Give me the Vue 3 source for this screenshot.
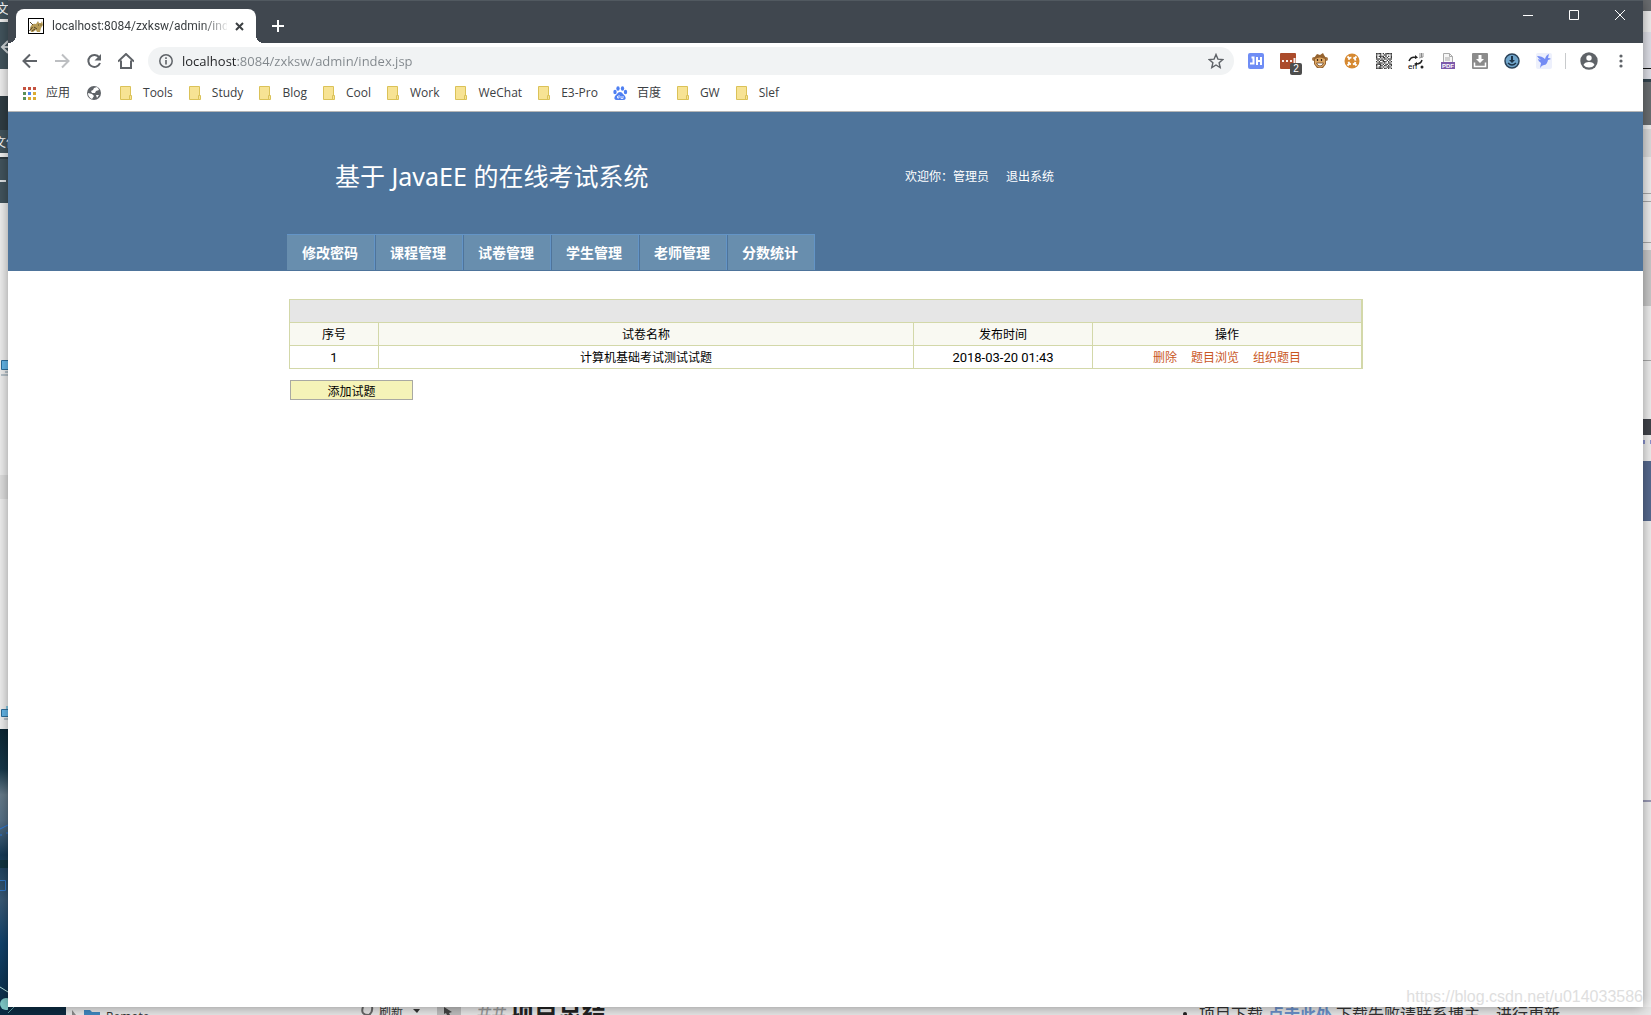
<script setup>
import { ref } from 'vue'

const address = ref('localhost:8084/zxksw/admin/index.jsp')

const bookmarks = [
  { name: 'Tools', icon: 'folder' },
  { name: 'Study', icon: 'folder' },
  { name: 'Blog', icon: 'folder' },
  { name: 'Cool', icon: 'folder' },
  { name: 'Work', icon: 'folder' },
  { name: 'WeChat', icon: 'folder' },
  { name: 'E3-Pro', icon: 'folder' },
  { name: '百度', icon: 'paw' },
  { name: 'GW', icon: 'folder' },
  { name: 'Slef', icon: 'folder' },
]

const menu = ['修改密码', '课程管理', '试卷管理', '学生管理', '老师管理', '分数统计']

const papers = [{ id: 1, name: '计算机基础考试测试试题', time: '2018-03-20 01:43' }]
const actions = ['删除', '题目浏览', '组织题目']

// Module pattern of the QR extension icon, one string per row.
const qr = [
  '111101011111', '100100110001', '101111010101', '100101101001', '111010110111', '010111001010',
  '101001110101', '011110100110', '111101011011', '100110110101', '101101001110', '111110110101',
]
const qrCells = qr.flatMap((row, y) => [...row].map((v, x) => ({ x, y, v })).filter((c) => c.v === '1'))
</script>

<template>
  <div class="desktop">
    <svg class="edge left" aria-hidden="true">
      <defs>
        <linearGradient id="wall" x1="0" y1="0" x2="0" y2="1">
          <stop offset="0" stop-color="#0b2633" />
          <stop offset=".14" stop-color="#17384a" />
          <stop offset=".23" stop-color="#667b8a" />
          <stop offset=".32" stop-color="#577187" />
          <stop offset=".44" stop-color="#173b57" />
          <stop offset=".6" stop-color="#3a5a76" />
          <stop offset=".75" stop-color="#12436c" />
          <stop offset="1" stop-color="#0b2b43" />
        </linearGradient>
      </defs>
      <rect width="8" height="203" fill="#42545d" />
      <text x="-4" y="13" font-size="13" fill="#fff">文</text>
      <rect y="19" width="8" height="3" fill="#f2f2f2" />
      <path d="M8 41L2 47l6 6M2 47h6" stroke="#cfd5d8" stroke-width="2" fill="none" />
      <rect y="69" width="8" height="27" fill="#f0f0f0" />
      <rect y="96" width="8" height="34" fill="#303d44" />
      <text x="-6" y="147" font-size="12" fill="#fff">文件</text>
      <rect y="153" width="8" height="4" fill="#f2f2f2" />
      <rect y="157" width="8" height="2" fill="#2e3b42" />
      <path d="M0 181h6" stroke="#dfe3e5" stroke-width="2" />
      <rect y="203" width="8" height="526" fill="#f0f0f0" />
      <rect y="475" width="8" height="24" fill="#e0e0e0" />
      <path d="M8 360.500H1.500v9H8" fill="#66b9ec" stroke="#2d6f9c" />
      <path d="M5 372h3M1 375h7" stroke="#8098a8" />
      <path d="M8 709.500H1.500v7H8" fill="#66b9ec" stroke="#2d6f9c" />
      <path d="M6 709v-3h2v3z" fill="#8bcde8" />
      <path d="M4 719h4" stroke="#8098a8" />
      <rect y="729" width="8" height="286" fill="url(#wall)" />
      <path d="M0 829l8-4M0 835h2M6 833h2" stroke="#2d7be0" />
      <rect y="860" width="8" height="8" fill="#123541" />
      <path d="M0 880.500h5.500v10H0" fill="none" stroke="#2f78c8" />
      <path d="M0 987l8 5" stroke="#b9e5e0" />
      <circle cx="6" cy="1004" r="6" fill="#7fc9c8" />
    </svg>

    <div class="browser">
      <div class="tabstrip">
        <div class="tab">
          <svg width="16" height="16" viewBox="0 0 16 16" aria-hidden="true">
            <rect x=".5" y=".5" width="15" height="15" fill="#fff" stroke="#000" />
            <path d="M2 10q2-5 6-4l2-3 1 2h2l1-2 1 4-2 3-1 4H9l-1-2-3 2H3z" fill="#b79b55" />
            <path d="M2 4l3 3M1.500 13l3-4M10 7h1M12.500 7h1M6 9l3 2M4 13l3-2" stroke="#514329" />
          </svg>
          <span class="tab-title">localhost:8084/zxksw/admin/index.jsp</span>
          <button class="plain" aria-label="Close tab">
            <svg width="9" height="9" viewBox="0 0 9 9"><path d="M1 1l7 7M8 1L1 8" stroke="#3c4043" stroke-width="2" /></svg>
          </button>
        </div>
        <button class="plain new-tab" aria-label="New tab">
          <svg width="12" height="12" viewBox="0 0 12 12"><path d="M6 0v12M0 6h12" stroke="#fff" stroke-width="2" /></svg>
        </button>
        <div class="window-controls">
          <button class="plain" aria-label="Minimize"><svg width="10" height="10"><path d="M0 5.500h10" stroke="#fff" /></svg></button>
          <button class="plain" aria-label="Maximize"><svg width="10" height="10"><path d="M.5.5h9v9h-9z" fill="none" stroke="#fff" /></svg></button>
          <button class="plain" aria-label="Close"><svg width="10" height="10"><path d="M0 0l10 10M10 0L0 10" stroke="#fff" /></svg></button>
        </div>
      </div>

      <div class="toolbar">
        <div class="nav-buttons">
          <button class="plain" aria-label="Back"><svg width="16" height="16" viewBox="0 0 16 16"><path d="M15 8H2M8 1.500L1.500 8 8 14.500" fill="none" stroke="#5f6368" stroke-width="2" /></svg></button>
          <button class="plain" aria-label="Forward"><svg width="16" height="16" viewBox="0 0 16 16"><path d="M1 8h13M8 1.500L14.500 8 8 14.500" fill="none" stroke="#bdbfc2" stroke-width="2" /></svg></button>
          <button class="plain" aria-label="Reload"><svg width="16" height="16" viewBox="0 0 16 16"><path d="M13.300 4.500A6 6 0 1 0 14 10" fill="none" stroke="#5f6368" stroke-width="2" /><path d="M15 1v6.500H8.500z" fill="#5f6368" /></svg></button>
          <button class="plain" aria-label="Home"><svg width="16" height="16" viewBox="0 0 16 16"><path d="M0 8.500L8 1l8 7.500M3 7.500V15h10V7.500" fill="none" stroke="#5f6368" stroke-width="2" /></svg></button>
        </div>
        <div class="omnibox">
          <svg width="14" height="14" viewBox="0 0 14 14" aria-hidden="true"><circle cx="7" cy="7" r="6.200" fill="none" stroke="#5f6368" stroke-width="1.500" /><path d="M7 6v4.500M7 3.300v1.700" stroke="#5f6368" stroke-width="1.600" /></svg>
          <input v-model="address" aria-label="Address" spellcheck="false" />
          <button class="plain" aria-label="Bookmark"><svg width="16" height="16" viewBox="0 0 16 16"><path d="M8 1.500l1.900 4.600 4.900.4-3.700 3.200 1.100 4.900L8 12l-4.200 2.600 1.100-4.900L1.200 6.500l4.900-.4z" fill="none" stroke="#5f6368" stroke-width="1.400" /></svg></button>
        </div>
        <div class="extensions">
          <button class="plain" aria-label="JH">
            <svg width="16" height="16"><rect width="16" height="16" rx="2" fill="#6f8df5" /><path d="M2 10.500h3.500V4.500H3.500M9 4v8M13 4v8M9 8h4" fill="none" stroke="#fff" stroke-width="2" /></svg>
          </button>
          <button class="plain badged" aria-label="Passwords">
            <svg width="16" height="16"><rect width="16" height="16" rx="1" fill="#ab4b2b" /><path d="M2 8h2M6 8h2M10 8h2M14.500 5v5" stroke="#fff" stroke-width="2" stroke-opacity=".9" /></svg>
            <span class="badge">2</span>
          </button>
          <button class="plain" aria-label="Tampermonkey">
            <svg width="16" height="16"><circle cx="2" cy="6" r="2" fill="#a47443" /><circle cx="14" cy="6" r="2" fill="#a47443" /><path d="M2 5l3-4 3 1 3-2 1 2 2 3v6l-3 4H5l-3-4z" fill="#95632f" /><path d="M3 6q5-3 10 0v5q-5 7-10 0z" fill="#dda764" /><path d="M4.500 10h7q-1 3-3.500 3t-3.500-3z" fill="#fff" stroke="#694322" stroke-width=".8" /><path d="M5.500 6v2M9.500 6v2" stroke="#37251a" stroke-width="1.200" /></svg>
          </button>
          <button class="plain" aria-label="Ring">
            <svg width="16" height="16"><circle cx="8" cy="8" r="7.500" fill="#d68931" /><circle cx="8" cy="8" r="3.600" fill="none" stroke="#fff" stroke-width="1.800" stroke-dasharray="3.600 2.050" stroke-dashoffset="-1" /><path d="M3.500 3.500l2 2M12.500 3.500l-2 2M3.500 12.500l2-2M12.500 12.500l-2-2" stroke="#fff" stroke-width="1.800" /></svg>
          </button>
          <button class="plain" aria-label="QR code">
            <svg width="16" height="16" viewBox="0 0 12 12"><rect v-for="c in qrCells" :key="c.x + '-' + c.y" :x="c.x" :y="c.y" width="1" height="1" fill="#3b3b3b" /></svg>
          </button>
          <button class="plain" aria-label="Translate">
            <svg class="glyphs" width="16" height="16"><path d="M1 8Q3 3 8 4.500M14 7q-1 4-6 4" fill="none" stroke="#222" stroke-width="1.500" /><path d="M7 2l3 2.500L7 6zM9 9l-3 2 3 2z" fill="#222" /><path d="M11 1h5M11 3h5M13.500 0v4M11 5l4-1" stroke="#777" stroke-width=".8" /><text x="0" y="16" font-size="8">en</text><circle cx="14" cy="14" r="1.500" fill="#222" /></svg>
          </button>
          <button class="plain" aria-label="PDF">
            <svg class="glyphs" width="16" height="16"><path d="M3.500 9V.5h6l3 3V9" fill="#f6f6f6" stroke="#aaa" /><path d="M9.500.5v3h3M5 5h5M5 7h5" stroke="#aaa" fill="none" /><rect x="1" y="9" width="14" height="7" fill="#7d59ab" /><text x="2" y="15" font-size="6" font-weight="700" fill="#fff">PDF</text></svg>
          </button>
          <button class="plain" aria-label="Downloads">
            <svg width="16" height="16"><rect width="16" height="16" rx="1" fill="#8b8b8b" /><path d="M6.500 2h3v4H12L8 10 4 6h2.500z" fill="#fff" /><path d="M2.500 9.500v4h11v-4" fill="none" stroke="#fff" stroke-width="1.500" /></svg>
          </button>
          <button class="plain" aria-label="Download manager">
            <svg width="16" height="16"><circle cx="8" cy="8" r="7" fill="#70a5cb" stroke="#294259" stroke-width="1.500" /><path d="M7 3h2v4h2L8 10 5 7h2z" fill="#1c3348" /><path d="M4 10q4 4 8 0" fill="none" stroke="#1c3348" stroke-width="1.300" /></svg>
          </button>
          <button class="plain" aria-label="Bird">
            <svg width="16" height="16"><rect width="16" height="16" rx="2" fill="#edf0fc" /><path d="M1 3q5 0 8 3 1-4 4-5l-1 4q2 0 3 1l-3 1q-1 5-4 5-2 0-4 3l1-5Q2 8 2 6l3 1Q2 5 1 3z" fill="#748cf4" /></svg>
          </button>
        </div>
        <span class="separator"></span>
        <button class="plain" aria-label="Profile"><svg width="18" height="18" viewBox="0 0 18 18"><circle cx="9" cy="9" r="8.700" fill="#5f6368" /><circle cx="9" cy="6" r="2.700" fill="#fff" /><path d="M3.500 13q1-3 5.500-3t5.500 3q-2 2.500-5.500 2.500T3.500 13z" fill="#fff" /></svg></button>
        <button class="plain more" aria-label="Menu"><svg width="4" height="14"><g fill="#5f6368"><circle cx="2" cy="2" r="1.600" /><circle cx="2" cy="7" r="1.600" /><circle cx="2" cy="12" r="1.600" /></g></svg></button>
      </div>

      <nav class="bookmarks" aria-label="Bookmarks">
        <a href="#">
          <svg width="16" height="14"><g fill="#c5523f"><path d="M2 1h3v3H2zM7 1h3v3H7zM12 1h3v3h-3z" /></g><path d="M2 6h3v3H2zM2 11h3v3H2z" fill="#5b9158" /><path d="M7 6h3v3H7z" fill="#4f86e8" /><path d="M12 6h3v3h-3zM7 11h3v3H7zM12 11h3v3h-3z" fill="#dcab32" /></svg>
          <span>应用</span>
        </a>
        <a href="#" aria-label="Globe">
          <svg width="16" height="16"><circle cx="8" cy="8" r="7" fill="#5f6368" /><path d="M8 3l3-1q2 2 2 3l-3 1-1 2H6L5 6l2-1zM2 8l4 1 2 2-2 3Q2 12 2 8zM10 10l3 0-2 3z" fill="#fff" /></svg>
        </a>
        <div class="bookmark-list">
          <a v-for="b in bookmarks" :key="b.name" href="#">
            <svg v-if="b.icon === 'folder'" width="16" height="16"><path d="M2.500 1.500h10v13h-10z" fill="#f7e394" stroke="#dbc258" /><path d="M11.500 10.500h2v4h-2z" fill="#f7e394" stroke="#dbc258" /></svg>
            <svg v-else width="16" height="16"><g fill="#4e7ff2"><ellipse cx="3" cy="7" rx="1.700" ry="2.200" /><ellipse cx="6" cy="3.500" rx="1.700" ry="2.300" /><ellipse cx="10.500" cy="3.500" rx="1.700" ry="2.300" /><ellipse cx="13.500" cy="7" rx="1.700" ry="2.200" /><path d="M8 7q2 0 3 2l2 2q2 4-2 4H5q-4 0-2-4l2-2q1-2 3-2z" /></g><path d="M7 10v3H5.500v-2M9 11v2.500h2V11" fill="none" stroke="#dfe8ff" /></svg>
            <span>{{ b.name }}</span>
          </a>
        </div>
      </nav>

      <main class="page">
        <header>
          <div class="container">
            <div class="banner">
              <h1>基于 JavaEE 的在线考试系统</h1>
              <p><span>欢迎你：管理员</span><a href="#">退出系统</a></p>
            </div>
            <nav class="menu" aria-label="管理菜单">
              <a v-for="m in menu" :key="m" href="#">{{ m }}</a>
            </nav>
          </div>
        </header>

        <section class="container content">
          <div class="table-frame">
            <table>
              <colgroup>
                <col class="no" />
                <col />
                <col class="time" />
                <col class="ops" />
              </colgroup>
              <thead>
                <tr class="blank"><th colspan="4"></th></tr>
                <tr>
                  <th>序号</th>
                  <th>试卷名称</th>
                  <th>发布时间</th>
                  <th>操作</th>
                </tr>
              </thead>
              <tbody>
                <tr v-for="p in papers" :key="p.id">
                  <td class="figure">{{ p.id }}</td>
                  <td>{{ p.name }}</td>
                  <td class="figure">{{ p.time }}</td>
                  <td><div class="actions"><a v-for="a in actions" :key="a" href="#">{{ a }}</a></div></td>
                </tr>
              </tbody>
            </table>
          </div>
          <button class="add">添加试题</button>
        </section>
      </main>
      <span class="watermark">https://blog.csdn.net/u014033586</span>
    </div>

    <svg class="edge right" aria-hidden="true">
      <rect width="8" height="100%" fill="#efefef" />
      <rect width="8" height="11" fill="#6a6d70" />
      <rect y="32" width="8" height="47" fill="#dfe0e8" />
      <rect y="68" width="8" height="1" fill="#111" />
      <rect y="79" width="8" height="3" fill="#34454f" />
      <rect y="82" width="8" height="43" fill="#6a6e71" />
      <rect y="129" width="8" height="28" fill="#dcdcdc" />
      <path d="M0 193.500h8M0 201.500h8M0 242.500h8M0 360.500h8" stroke="#a8a8a8" />
      <rect y="250" width="8" height="56" fill="#c9c9c9" />
      <rect y="419" width="8" height="16" fill="#40434a" />
      <path d="M0 442h2M7 442h1" stroke="#8a93cf" stroke-width="4" />
      <rect y="461" width="8" height="60" fill="#56698f" />
      <path d="M0 801h8" stroke="#9a9ab5" stroke-width="2" />
    </svg>

    <div class="behind" aria-hidden="true">
      <svg width="700" height="8">
        <rect width="58" height="8" fill="#0c2a40" />
        <path d="M0 6l6-6" stroke="#5f9fa5" />
        <path d="M64 8V3l4 5z" fill="#888" />
        <path d="M76 8V3h6l2 2h8v3z" fill="#3e86be" />
        <text x="98" y="14" font-size="12" fill="#333">Remote</text>
        <path d="M355 0q-3 8 6 8M364 0q1 5-3 8" fill="none" stroke="#666" stroke-width="2" />
        <text x="371" y="9" font-size="12" fill="#333">刷新</text>
        <path d="M405 2h7l-3 4z" fill="#333" />
        <rect x="429" width="24" height="8" fill="#bdbdbd" />
        <path d="M436 0l8 5-3 1 1 2h-3l-1-2-2 1z" fill="#444" />
        <text x="469" y="14" font-size="23" fill="#999">##</text>
        <text x="502" y="13" font-size="24" font-weight="700" fill="#222">项目总结</text>
      </svg>
      <svg width="517" height="8">
        <circle cx="51" cy="7" r="2" fill="#222" />
        <text x="65" y="13" font-size="16" fill="#333">项目下载</text>
        <text x="134" y="13" font-size="16" font-weight="700" fill="#6a8fc8">点击此处</text>
        <text x="202" y="13" font-size="16" fill="#333">下载失败请联系博主，进行更新</text>
      </svg>
    </div>
  </div>
</template>

<style>
body {
  background: #e4e4e4;
}
</style>

<style scoped>
* {
  box-sizing: border-box;
}

.desktop {
  display: grid;
  grid-template: 1fr 8px / 8px 1fr 8px;
  min-height: 100vh;
  font: 12px/18px "Open Sans", "Noto Sans CJK SC", sans-serif;
  color: #000;
}

a {
  color: inherit;
  text-decoration: none;
}

svg {
  display: block;
  flex: none;
}

.edge {
  width: 8px;
  height: 100%;
}

.left {
  grid-area: 1 / 1 / 3 / 2;
}

.right {
  grid-area: 1 / 3;
}

.behind {
  grid-area: 2 / 2 / 3 / 4;
  display: flex;
  justify-content: space-between;
  overflow: hidden;
  background: #e6e6e6;
}

.browser {
  grid-area: 1 / 2;
  z-index: 1;
  display: flex;
  flex-direction: column;
  min-width: 0;
  position: relative;
  background: #fff;
  box-shadow: 0 0 12px rgb(0 0 0 / 40%);
}

.plain {
  display: grid;
  place-items: center;
  padding: 0;
  border: 0;
  background: none;
}

.tabstrip {
  display: flex;
  align-items: flex-end;
  height: 43px;
  padding-left: 8px;
  background: #40474f;
  border-top: 1px solid #515960;
}

.tab {
  position: relative;
  display: flex;
  align-items: center;
  gap: 8px;
  width: 240px;
  height: 34px;
  padding: 0 12px;
  background: #fff;
  border-radius: 8px 8px 0 0;
  color: #3c4043;
}

.tab::before,
.tab::after {
  content: "";
  position: absolute;
  bottom: 0;
  width: 8px;
  height: 8px;
}

.tab::before {
  right: 100%;
  background: radial-gradient(circle at 0 0, transparent 8px, #fff 8px);
}

.tab::after {
  left: 100%;
  background: radial-gradient(circle at 100% 0, transparent 8px, #fff 8px);
}

.tab-title {
  flex: 1;
  min-width: 0;
  overflow: hidden;
  font-family: Roboto, sans-serif;
  white-space: nowrap;
  mask-image: linear-gradient(90deg, #000 150px, transparent 178px);
}

.new-tab {
  width: 44px;
  height: 34px;
}

.window-controls {
  display: flex;
  align-self: flex-start;
  margin-left: auto;
}

.window-controls button {
  width: 46px;
  height: 28px;
}

.toolbar {
  display: flex;
  align-items: center;
  height: 36px;
  padding: 0 20px 0 14px;
}

.nav-buttons {
  display: flex;
  gap: 16px;
  margin-right: 14px;
}

.omnibox {
  flex: 1;
  display: flex;
  align-items: center;
  gap: 9px;
  height: 28px;
  padding: 0 10px 0 11px;
  background: #f1f3f4;
  border-radius: 14px;
}

.omnibox input {
  flex: 1;
  min-width: 0;
  padding: 0;
  border: 0;
  outline: 0;
  font: 13px/20px "Open Sans", sans-serif;
  color: #80868b;
  background: linear-gradient(90deg, #202124 55px, #80868b 55px);
  background-clip: text;
  -webkit-text-fill-color: transparent;
}

.extensions {
  display: flex;
  gap: 16px;
  margin: 0 13px 0 14px;
}

.badged {
  position: relative;
}

.badge {
  position: absolute;
  left: 10px;
  top: 10px;
  width: 12px;
  height: 12px;
  border-radius: 2px;
  background: #4d4d4d;
  color: #fff;
  font-size: 10px;
  line-height: 12px;
  text-align: center;
}

.glyphs {
  font-family: "Liberation Sans", sans-serif;
}

.separator {
  width: 1px;
  height: 16px;
  margin-right: 14px;
  background: #c8cacc;
}

.more {
  margin-left: 21px;
}

.bookmarks {
  display: flex;
  align-items: center;
  gap: 16px;
  height: 33px;
  padding: 0 13px 5px;
  border-bottom: 1px solid #b6b6b6;
  color: #3c4043;
  white-space: nowrap;
}

.bookmark-list {
  display: flex;
  gap: 14px;
}

.bookmarks a {
  display: flex;
  align-items: center;
  gap: 9px;
}

.container {
  width: 1077px;
  max-width: 100%;
  margin: 0 auto;
}

header {
  height: 159px;
  background: #4e749b;
  color: #fff;
}

.banner {
  display: flex;
  align-items: center;
  height: 122px;
  padding: 6px 0 0 48px;
}

h1 {
  width: 570px;
  margin: 0;
  font-family: "Noto Sans", "Noto Sans CJK SC", sans-serif;
  font-size: 25px;
  font-weight: 400;
  line-height: 36px;
}

.banner p {
  display: flex;
  gap: 17px;
  margin: 0;
  padding-top: 2px;
}

.menu {
  display: flex;
}

.menu a {
  width: 88px;
  height: 36px;
  padding-right: 1px;
  border: solid #6394c6;
  border-width: 1px 1px 0 0;
  background: #688eae;
  font-size: 14px;
  font-weight: 700;
  line-height: 36px;
  text-align: center;
}

.menu a + a {
  box-shadow: inset 1px 0 #4e749b;
}

.content {
  padding: 28px 1px 0 2px;
}

.table-frame {
  border-right: 1px solid #d3d8a9;
}

table {
  width: 100%;
  border-collapse: collapse;
  table-layout: fixed;
  text-align: center;
}

th,
td {
  height: 23px;
  padding: 2px 0 0;
  border: 1px solid #d3d8a9;
  font-weight: 400;
}

th {
  background: #f9f9f2;
}

.blank th {
  background: #e6e6e6;
}

.no {
  width: 89px;
}

.time {
  width: 179px;
}

.ops {
  width: 269px;
}

.figure {
  font-family: Roboto, sans-serif;
  font-size: 13px;
}

.actions {
  display: flex;
  justify-content: center;
  gap: 14px;
  color: #c9571f;
}

.add {
  width: 123px;
  height: 20px;
  margin: 11px 0 0 1px;
  padding: 2px 0 0;
  border: 1px solid #a9a9a3;
  background: #f5f3b8;
  color: #000;
  font: inherit;
}

.watermark {
  align-self: flex-end;
  margin-top: auto;
  color: #dedede;
  font: 16px/20px "Liberation Sans", sans-serif;
}
</style>
